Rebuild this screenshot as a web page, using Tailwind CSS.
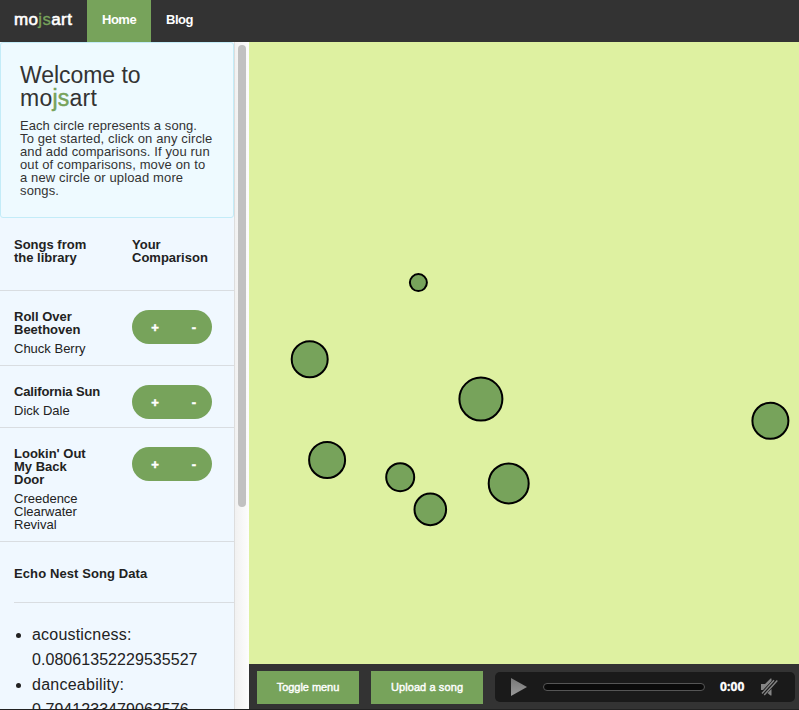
<!DOCTYPE html>
<html lang="en">
<head>
<meta charset="utf-8">
<title>mojsart</title>
<script src="https://cdn.jsdelivr.net/npm/@tailwindcss/browser@4"></script>
</head>
<body class="flex h-[710px] w-[799px] flex-col overflow-hidden border-b border-[#222] bg-[#333] font-['Liberation_Sans',Arial,sans-serif] text-[#222]">
<nav class="flex h-[42px] shrink-0 text-[13px] leading-[40px] font-bold tracking-[-0.5px] text-white">
  <a class="w-[87px] pl-[14px] text-[17px] font-normal tracking-[0.35px] whitespace-nowrap"><span class="[-webkit-text-stroke:0.6px_white]">mo</span><span class="text-[#77a35b] [-webkit-text-stroke:0.3px_#77a35b]">js</span><span class="[-webkit-text-stroke:0.6px_white]">art</span></a>
  <a class="w-16 bg-[#77a35b] pl-[15px]">Home</a>
  <a class="pl-[15px]">Blog</a>
</nav>
<div class="flex min-h-0 flex-1">
  <aside class="flex w-[249px] shrink-0 overflow-hidden bg-[#f0f8ff]">
    <div class="w-[235px] shrink-0 border-r border-[#ddd] text-[13px] leading-[13px]">
      <section class="h-[176px] rounded-[3px] border border-[#c3ecf8] bg-[#eefaff] pt-[21px] pl-[19px] text-[#333]">
        <h1 class="text-[23px] leading-[23px] tracking-[-0.05px]">Welcome to<br><span class="tracking-[0.25px]">mo<span class="text-[#77a35b] [-webkit-text-stroke:0.5px_#77a35b]">js</span>art</span></h1>
        <p class="mt-[9px] tracking-[0.13px] whitespace-nowrap"><span class="tracking-[0.07px]">Each circle represents a song.</span><br>To get started, click on any circle<br>and add comparisons. If you run<br>out of comparisons, move on to<br>a new circle or upload more<br>songs.</p>
      </section>
      <div class="flex h-[73px] border-b border-[#d9dde1] pt-5 pl-[14px] font-bold">
        <h2 class="w-[118px]">Songs from<br>the library</h2>
        <h2>Your<br>Comparison</h2>
      </div>
      <div class="flex h-[75px] border-b border-[#d9dde1] pt-[19px] pl-[14px]">
        <div class="w-[118px]"><b>Roll Over<br>Beethoven</b><p class="mt-[6px]">Chuck Berry</p></div>
        <div class="flex h-[34px] w-20 rounded-full bg-[#77a35b] text-[13px] leading-[35px] font-bold text-white [-webkit-text-stroke:0.5px_white]"><button class="w-[39px] pl-[7px]">+</button><button class="w-[41px] pl-[5px]">-</button></div>
      </div>
      <div class="flex h-[62px] border-b border-[#d9dde1] pt-[19px] pl-[14px]">
        <div class="w-[118px]"><b class="tracking-[-0.15px]">California Sun</b><p class="mt-[6px]">Dick Dale</p></div>
        <div class="flex h-[34px] w-20 rounded-full bg-[#77a35b] text-[13px] leading-[35px] font-bold text-white [-webkit-text-stroke:0.5px_white]"><button class="w-[39px] pl-[7px]">+</button><button class="w-[41px] pl-[5px]">-</button></div>
      </div>
      <div class="flex h-[114px] border-b border-[#d9dde1] pt-[19px] pl-[14px]">
        <div class="w-[118px]"><b>Lookin' Out<br>My Back<br>Door</b><p class="mt-[6px]">Creedence<br>Clearwater<br>Revival</p></div>
        <div class="flex h-[34px] w-20 rounded-full bg-[#77a35b] text-[13px] leading-[35px] font-bold text-white [-webkit-text-stroke:0.5px_white]"><button class="w-[39px] pl-[7px]">+</button><button class="w-[41px] pl-[5px]">-</button></div>
      </div>
      <h2 class="ml-[14px] h-[61px] border-b border-[#d9dde1] pt-[25px] font-bold tracking-[0.1px]">Echo Nest Song Data</h2>
      <ul class="mt-[19px] list-disc pl-8 text-[16px] leading-[25px] tracking-[0.05px]">
        <li><span class="tracking-[0.2px]">acousticness:</span> <br>0.08061352229535527</li>
        <li><span class="tracking-[0.25px]">danceability:</span> <br>0.7941233479062576</li>
      </ul>
    </div>
    <div class="w-[14px] bg-linear-to-r from-[#f1f1f1] to-[#fdfdfd] pt-[3px] pl-[3px]">
      <div class="h-[462px] w-2 rounded-full bg-[#c1c1c1]"></div>
    </div>
  </aside>
  <main class="flex min-w-0 flex-1 flex-col">
    <svg class="block h-[622px] w-[550px] shrink-0 bg-[#def1a1]" viewBox="249 42 550 622" fill="#77a35b" stroke="#000" stroke-width="2">
      <circle cx="418.4" cy="282.6" r="8.5"/>
      <circle cx="309.7" cy="359.3" r="18"/>
      <circle cx="480.9" cy="399.1" r="21.5"/>
      <circle cx="327.1" cy="460" r="18"/>
      <circle cx="400.2" cy="477.2" r="14"/>
      <circle cx="430.3" cy="509.4" r="15.8"/>
      <circle cx="508.7" cy="483.4" r="20"/>
      <circle cx="770.4" cy="420.8" r="18"/>
    </svg>
    <footer class="flex flex-1 pt-[7px] pl-2 text-[11px] text-white">
      <button class="h-[33px] w-[102px] bg-[#77a35b] tracking-[-0.05px] [-webkit-text-stroke:0.4px_white]">Toggle menu</button>
      <button class="ml-3 h-[33px] w-[112px] bg-[#77a35b] tracking-[0.1px] [-webkit-text-stroke:0.4px_white]">Upload a song</button>
      <div class="mt-px ml-3 flex h-[30px] w-[300px] items-center rounded-[5px] bg-[#1a1a1a]">
        <svg class="ml-4 h-[18px] w-4" viewBox="0 0 16 18"><defs><linearGradient id="g" x2="0" y2="1"><stop stop-color="#777"/><stop offset="1" stop-color="#999"/></linearGradient></defs><path d="M0 0L16 9L0 18Z" fill="url(#g)"/></svg>
        <div class="ml-4 h-2 w-[162px] rounded-full border border-[#555] bg-[#0a0a0a]"></div>
        <span class="ml-[15px] w-[25px] font-['Open_Sans',sans-serif] text-[12px] leading-[14px] font-bold tracking-[0.15px] [-webkit-text-stroke:0.3px_white]">0:00</span>
        <svg class="ml-4 h-[18px] w-[17px]" viewBox="0 0 17 18" fill="#858585"><path d="M0 6H4L9.5 0.5H10.5V3L2 12H0Z"/><path d="M10.5 11V17.5H9.5L6.5 15Z"/><path d="M1 15.5L13 2.2M3.2 17L16.3 2.5" fill="none" stroke="#858585" stroke-width="1.4"/></svg>
      </div>
    </footer>
  </main>
</div>
</body>
</html>
